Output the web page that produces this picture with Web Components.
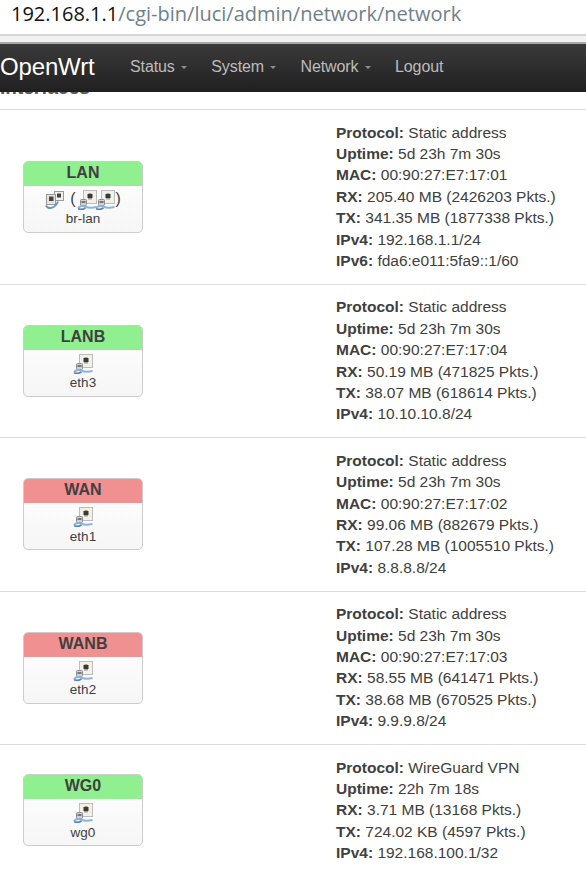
<!DOCTYPE html>
<html>
<head>
<meta charset="utf-8">
<title>Interfaces - OpenWrt</title>
<style>
  html, body { margin: 0; padding: 0; background: #fff; }
  body { width: 586px; height: 886px; overflow: hidden; font-family: "Liberation Sans", Arial, sans-serif; }
</style>
</head>
<body>
<address-bar host="192.168.1.1" path="/cgi-bin/luci/admin/network/network"></address-bar>
<top-nav brand="OpenWrt">
  <nav-item caret>Status</nav-item>
  <nav-item caret>System</nav-item>
  <nav-item caret>Network</nav-item>
  <nav-item>Logout</nav-item>
</top-nav>
<section-title>Interfaces</section-title>

<iface-row name="LAN" state="up" device="br-lan" icons="bridge">
  <info-line label="Protocol">Static address</info-line>
  <info-line label="Uptime">5d 23h 7m 30s</info-line>
  <info-line label="MAC">00:90:27:E7:17:01</info-line>
  <info-line label="RX">205.40 MB (2426203 Pkts.)</info-line>
  <info-line label="TX">341.35 MB (1877338 Pkts.)</info-line>
  <info-line label="IPv4">192.168.1.1/24</info-line>
  <info-line label="IPv6">fda6:e011:5fa9::1/60</info-line>
</iface-row>
<iface-row name="LANB" state="up" device="eth3">
  <info-line label="Protocol">Static address</info-line>
  <info-line label="Uptime">5d 23h 7m 30s</info-line>
  <info-line label="MAC">00:90:27:E7:17:04</info-line>
  <info-line label="RX">50.19 MB (471825 Pkts.)</info-line>
  <info-line label="TX">38.07 MB (618614 Pkts.)</info-line>
  <info-line label="IPv4">10.10.10.8/24</info-line>
</iface-row>
<iface-row name="WAN" state="wan" device="eth1">
  <info-line label="Protocol">Static address</info-line>
  <info-line label="Uptime">5d 23h 7m 30s</info-line>
  <info-line label="MAC">00:90:27:E7:17:02</info-line>
  <info-line label="RX">99.06 MB (882679 Pkts.)</info-line>
  <info-line label="TX">107.28 MB (1005510 Pkts.)</info-line>
  <info-line label="IPv4">8.8.8.8/24</info-line>
</iface-row>
<iface-row name="WANB" state="wan" device="eth2">
  <info-line label="Protocol">Static address</info-line>
  <info-line label="Uptime">5d 23h 7m 30s</info-line>
  <info-line label="MAC">00:90:27:E7:17:03</info-line>
  <info-line label="RX">58.55 MB (641471 Pkts.)</info-line>
  <info-line label="TX">38.68 MB (670525 Pkts.)</info-line>
  <info-line label="IPv4">9.9.9.8/24</info-line>
</iface-row>
<iface-row name="WG0" state="up" device="wg0">
  <info-line label="Protocol">WireGuard VPN</info-line>
  <info-line label="Uptime">22h 7m 18s</info-line>
  <info-line label="RX">3.71 MB (13168 Pkts.)</info-line>
  <info-line label="TX">724.02 KB (4597 Pkts.)</info-line>
  <info-line label="IPv4">192.168.100.1/32</info-line>
</iface-row>

<script>
// browser url bar, only the text and the lines under it
class AddressBar extends HTMLElement {
    constructor() {
        super();
        this.attachShadow({ mode: 'open' });
    }
    connectedCallback() {
        this.shadowRoot.innerHTML = `
            <style>
                :host { display: block; height: 44px; background: #fff; }
                .url {
                    height: 34px;
                    box-sizing: border-box;
                    padding: 0 0 7px 11px;
                    display: flex;
                    align-items: center;
                    font: 20px "Open Sans", "Noto Sans", sans-serif;
                    color: #6f7f8c;
                }
                b { font-weight: normal; color: #111; }
                .gap {
                    height: 10px;
                    box-sizing: border-box;
                    background: #f2f2f2;
                    border-top: 2px solid #d6d6d6;
                    border-bottom: 2px solid #a8a8a8;
                }
            </style>
            <div class="url"><b>${this.getAttribute('host')}</b>${this.getAttribute('path')}</div>
            <div class="gap"></div>
        `;
    }
}
customElements.define('address-bar', AddressBar);

class TopNav extends HTMLElement {
    constructor() {
        super();
        this.attachShadow({ mode: 'open' });
    }
    connectedCallback() {
        this.shadowRoot.innerHTML = `
            <style>
                :host {
                    display: flex;
                    align-items: center;
                    height: 48px;
                    background: linear-gradient(to bottom, #3a3a3a, #202020);
                }
                .brand { font-size: 24px; color: #fff; width: 115px; letter-spacing: -.15px; padding-bottom: 2px; }
                .items { display: flex; gap: 24.5px; padding-left: 15px; }
            </style>
            <div class="brand">${this.getAttribute('brand')}</div>
            <div class="items"><slot></slot></div>
        `;
    }
}
customElements.define('top-nav', TopNav);

class NavItem extends HTMLElement {
    constructor() {
        super();
        this.attachShadow({ mode: 'open' });
    }
    connectedCallback() {
        const caret = this.hasAttribute('caret') ? '<span class="caret"></span>' : '';
        this.shadowRoot.innerHTML = `
            <style>
                :host { display: flex; align-items: center; font-size: 16px; color: #bcbcbc; padding-bottom: 3px; letter-spacing: -.1px; }
                .caret {
                    margin-left: 6px;
                    margin-top: 2px;
                    border-top: 3px solid #8f8f8f;
                    border-left: 3px solid transparent;
                    border-right: 3px solid transparent;
                }
            </style>
            <slot></slot>${caret}
        `;
    }
}
customElements.define('nav-item', NavItem);

// heading scrolled mostly under the fixed navbar, only the feet of the letters show
class SectionTitle extends HTMLElement {
    constructor() {
        super();
        this.attachShadow({ mode: 'open' });
    }
    connectedCallback() {
        this.shadowRoot.innerHTML = `
            <style>
                :host { display: block; height: 17px; box-sizing: border-box; padding-bottom: 13px; }
                .clip { height: 4px; overflow: hidden; display: flex; align-items: flex-end; }
                span { font-size: 19px; font-weight: bold; color: #5a5a5a; line-height: 20px; margin-bottom: -2px; }
            </style>
            <div class="clip"><span><slot></slot></span></div>
        `;
    }
}
customElements.define('section-title', SectionTitle);

class EthIcon extends HTMLElement {
    constructor() {
        super();
        this.attachShadow({ mode: 'open' });
    }
    connectedCallback() {
        this.shadowRoot.innerHTML = `
            <style>
                :host { display: inline-block; width: 20px; height: 20px; }
                svg { display: block; }
            </style>
            <svg width="20" height="20" viewBox="0 0 20 20">
                <rect x="6.5" y="0.5" width="13" height="13" fill="#f0f0ec" stroke="#bdbdb8"/>
                <rect x="10.5" y="4" width="5" height="4" fill="#3a3a32"/>
                <rect x="11.5" y="3" width="3" height="1" fill="#c2a440"/>
                <rect x="11" y="8" width="4" height="1.5" fill="#a2a294"/>
                <rect x="3.5" y="9.5" width="6" height="6" rx="1" fill="#d2d2d0" stroke="#8d8d8d"/>
                <path d="M4.5 11h4v2h-4z" fill="#777"/>
                <path d="M1 18.5 C2.5 15.8 6 15.4 8.5 16.6 S14 18.2 19.5 17" fill="none" stroke="#8db2de" stroke-width="2"/>
                <path d="M1.2 18.7 C3.5 19.7 6.5 19.3 8.5 17.8" fill="none" stroke="#4b7fc0" stroke-width="1.6"/>
            </svg>
        `;
    }
}
customElements.define('eth-icon', EthIcon);

class SwitchIcon extends HTMLElement {
    constructor() {
        super();
        this.attachShadow({ mode: 'open' });
    }
    connectedCallback() {
        this.shadowRoot.innerHTML = `
            <style>
                :host { display: inline-block; width: 20px; height: 20px; }
                svg { display: block; }
            </style>
            <svg width="20" height="20" viewBox="0 0 20 20">
                <rect x="9.5" y="1.5" width="9" height="9" fill="#f0f0ec" stroke="#9a9a96"/>
                <rect x="12" y="3.5" width="4" height="4" fill="#44443c"/>
                <rect x="1.5" y="4.5" width="9" height="10" fill="#e4e4e0" stroke="#9a9a96"/>
                <rect x="4" y="6.5" width="4.5" height="4.5" fill="#44443c"/>
                <path d="M1 15.5 C3 19.5 10 19 13 11.5" fill="none" stroke="#6a97cd" stroke-width="2"/>
            </svg>
        `;
    }
}
customElements.define('switch-icon', SwitchIcon);

class NetBadge extends HTMLElement {
    constructor() {
        super();
        this.attachShadow({ mode: 'open' });
    }
    connectedCallback() {
        const color = this.getAttribute('state') === 'wan' ? '#f09090' : '#90f090';
        const icons = this.getAttribute('icons') === 'bridge'
            ? '<switch-icon></switch-icon><span class="paren open">(</span><eth-icon></eth-icon><eth-icon class="next"></eth-icon><span class="paren">)</span>'
            : '<eth-icon></eth-icon>';
        this.shadowRoot.innerHTML = `
            <style>
                :host {
                    display: block;
                    width: 120px;
                    box-sizing: border-box;
                    border: 1px solid #ccc;
                    border-radius: 5px;
                    overflow: hidden;
                    background: linear-gradient(to bottom, #fff, #f6f6f6);
                    font-size: 13.5px;
                    text-align: center;
                    color: #404040;
                }
                .head {
                    height: 24px;
                    line-height: 22px;
                    background: ${color};
                    font-size: 16px;
                    font-weight: bold;
                }
                .body { padding-top: 4px; height: 46px; box-sizing: border-box; }
                .icons { display: flex; justify-content: center; align-items: center; height: 20px; }
                .paren { font-size: 16px; margin: -2px 0 0 1px; }
                .open { margin-left: 5px; margin-right: 1px; }
                .next { margin-left: -2px; }
                .dev { line-height: 16px; margin-top: 1.6px; }
            </style>
            <div class="head">${this.getAttribute('name')}</div>
            <div class="body">
                <div class="icons">${icons}</div>
                <div class="dev">${this.getAttribute('device')}</div>
            </div>
        `;
    }
}
customElements.define('net-badge', NetBadge);

class IfaceRow extends HTMLElement {
    constructor() {
        super();
        this.attachShadow({ mode: 'open' });
    }
    connectedCallback() {
        const attrs = ['name', 'state', 'device', 'icons']
            .filter(a => this.hasAttribute(a))
            .map(a => `${a}="${this.getAttribute(a)}"`)
            .join(' ');
        this.shadowRoot.innerHTML = `
            <style>
                :host {
                    display: grid;
                    grid-template-columns: 336px 1fr;
                    align-items: center;
                    border-top: 1px solid #ddd;
                    padding: 11.5px 0 12.5px;
                }
                .left { padding: .6px 0 0 23px; }
            </style>
            <div class="left"><net-badge ${attrs}></net-badge></div>
            <div class="info"><slot></slot></div>
        `;
    }
}
customElements.define('iface-row', IfaceRow);

class InfoLine extends HTMLElement {
    constructor() {
        super();
        this.attachShadow({ mode: 'open' });
    }
    connectedCallback() {
        this.shadowRoot.innerHTML = `
            <style>
                :host { display: block; font-size: 15.5px; line-height: 21.4px; color: #404040; white-space: nowrap; }
                b { font-weight: bold; }
            </style>
            <b>${this.getAttribute('label')}:</b> <slot></slot>
        `;
    }
}
customElements.define('info-line', InfoLine);
</script>
</body>
</html>
